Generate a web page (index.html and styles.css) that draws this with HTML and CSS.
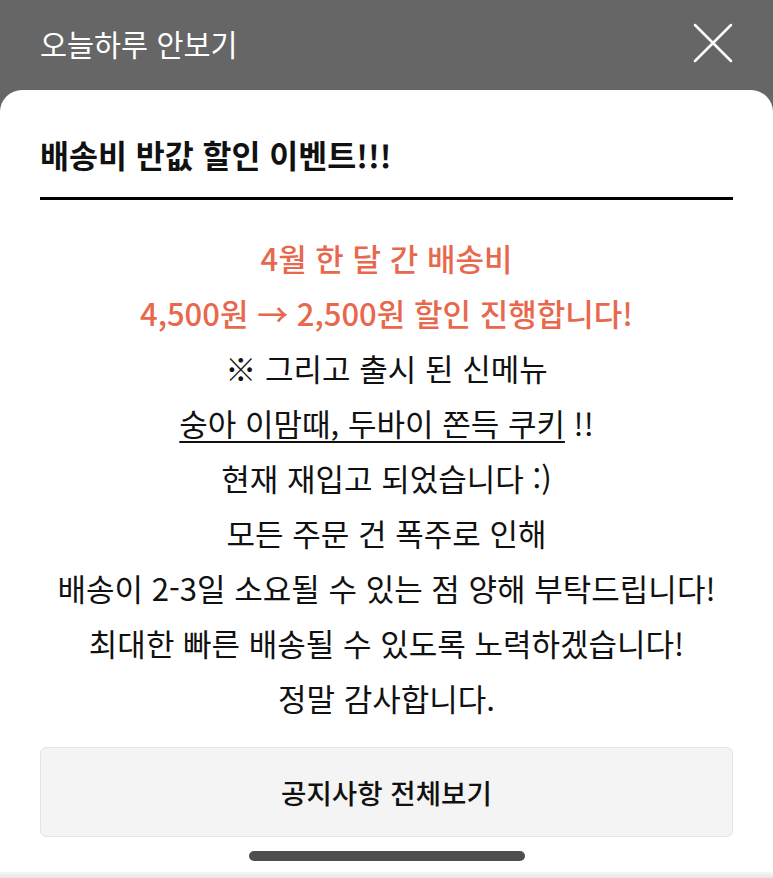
FILE: index.html
```html
<!DOCTYPE html>
<html lang="ko">
<head>
<meta charset="utf-8">
<title>공지</title>
<link rel="stylesheet" href="styles.css">
</head>
<body>
<div class="screen">
  <div class="topbar">
    <span class="skip">오늘하루 안보기</span>
    <svg class="close" width="40" height="40" viewBox="0 0 40 40" aria-hidden="true">
      <path d="M2 2 L38 38 M38 2 L2 38" stroke="#ffffff" stroke-width="2.5" stroke-linecap="round" fill="none"/>
    </svg>
  </div>
  <div class="sheet">
    <h1 class="title">배송비 반값 할인 이벤트!!!</h1>
    <div class="divider"></div>
    <div class="content">
      <p class="line accent">4월 한 달 간 배송비</p>
      <p class="line accent">4,500원 → 2,500원 할인 진행합니다!</p>
      <p class="line">※ 그리고 출시 된 신메뉴</p>
      <p class="line"><span class="ul">숭아 이맘때, 두바이 쫀득 쿠키</span> !!</p>
      <p class="line">현재 재입고 되었습니다 :)</p>
      <p class="line">모든 주문 건 폭주로 인해</p>
      <p class="line">배송이 2-3일 소요될 수 있는 점 양해 부탁드립니다!</p>
      <p class="line">최대한 빠른 배송될 수 있도록 노력하겠습니다!</p>
      <p class="line">정말 감사합니다.</p>
    </div>
    <button class="notice-btn" type="button">공지사항 전체보기</button>
    <div class="home-indicator"></div>
    <div class="bottom-edge"></div>
  </div>
</div>
</body>
</html>
```
FILE: styles.css
```css
* { box-sizing: border-box; }
html, body {
  margin: 0;
  padding: 0;
  background: #666666;
}
body {
  font-family: "Noto Sans CJK KR", "Noto Sans", sans-serif;
  color: #111111;
}
.screen {
  width: 773px;
  height: 878px;
  display: flex;
  flex-direction: column;
  overflow: hidden;
  background: #666666;
}
.topbar {
  height: 90px;
  flex: 0 0 90px;
  display: flex;
  align-items: center;
  justify-content: space-between;
  padding: 0 40px 4px 40px;
}
.skip {
  color: #ffffff;
  font-size: 29.4px;
  font-weight: 400;
}
.close {
  display: block;
}
.sheet {
  flex: 1;
  background: #ffffff;
  border-radius: 22px 22px 0 0;
  padding: 44px 40px 0 40px;
  display: flex;
  flex-direction: column;
}
.title {
  margin: 0;
  font-size: 31.5px;
  line-height: 40px;
  font-weight: 700;
  color: #111111;
}
.divider {
  margin-top: 23px;
  height: 3px;
  background: #000000;
}
.content {
  margin-top: 30px;
  text-align: center;
}
.line {
  margin: 0;
  font-size: 31px;
  line-height: 55px;
  font-weight: 400;
  color: #111111;
  white-space: nowrap;
}
.accent {
  color: #e8684d;
  font-weight: 500;
}
.ul {
  text-decoration: underline;
  text-decoration-thickness: 2px;
  text-underline-offset: 5px;
}
.notice-btn {
  margin-top: 22px;
  height: 90px;
  width: 100%;
  background: #f4f4f4;
  border: 1.5px solid #e3e3e3;
  border-radius: 6px;
  font-family: "Noto Sans CJK KR", "Noto Sans", sans-serif;
  font-size: 27.6px;
  font-weight: 500;
  color: #111111;
}
.home-indicator {
  margin: 14px auto 0 auto;
  width: 276px;
  height: 10px;
  border-radius: 5px;
  background: #4f4f4f;
}
.bottom-edge {
  margin: 11px -40px 0 -40px;
  flex: 1;
  background: linear-gradient(#f6f6f6, #e6e6e6);
}
```
